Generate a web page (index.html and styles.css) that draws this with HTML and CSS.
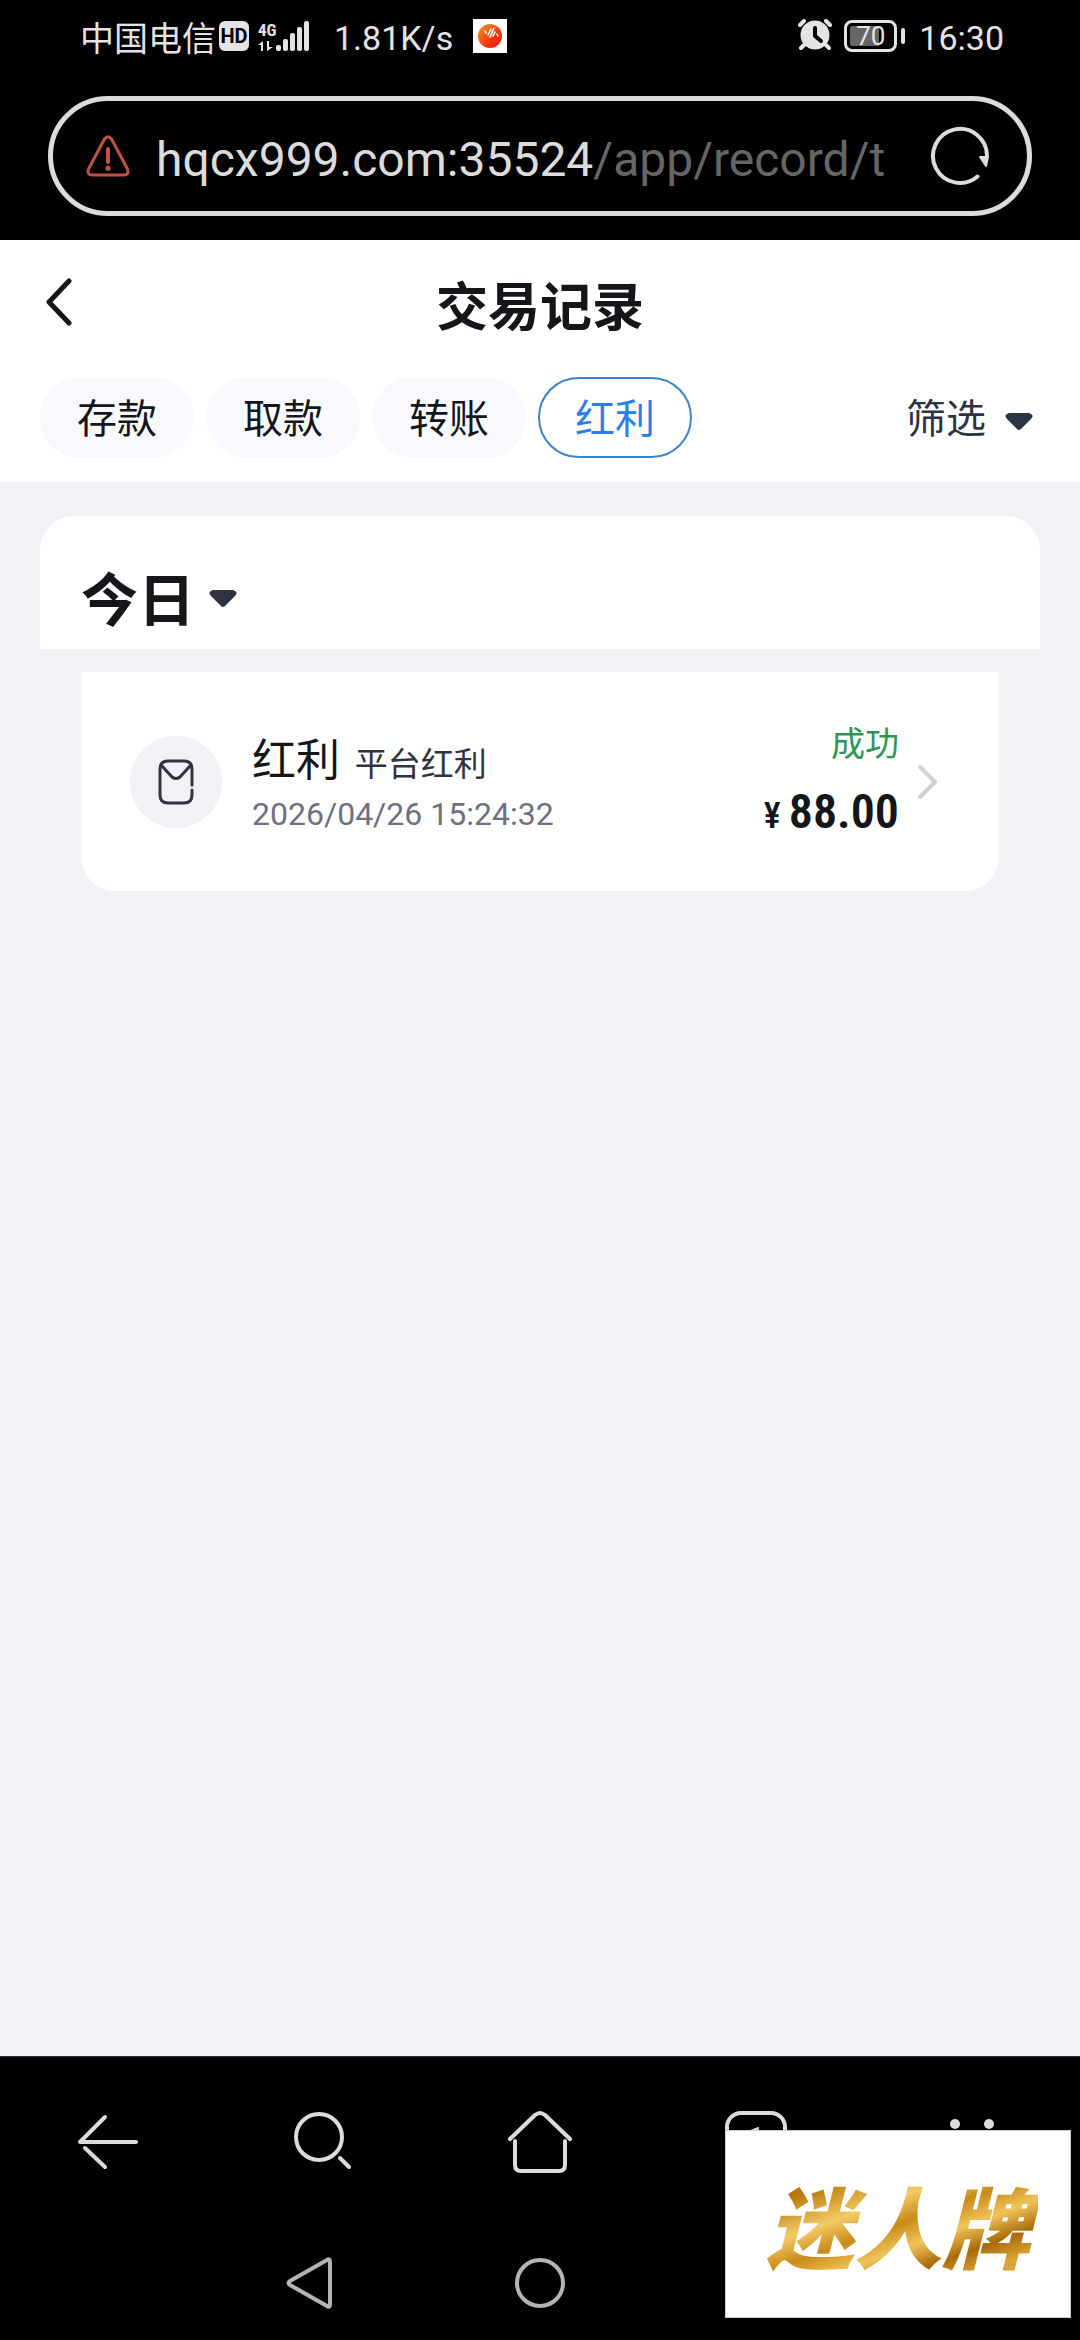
FILE: index.html
```html
<!DOCTYPE html>
<html lang="zh-CN">
<head>
    <meta charset="UTF-8">
    <meta name="viewport" content="width=device-width, initial-scale=1.0">
    <title>交易记录</title>
    <link rel="stylesheet" href="styles.css">
</head>
<body>

    <!-- Phone status bar -->
    <div class="status-bar">
        <div class="status-left">
            <span class="carrier">中国电信</span>
            <span class="hd">HD</span>
            <span class="network">
                <span class="network-type">4G</span>
                <svg width="16" height="12" viewBox="0 0 16 12" fill="#e4e4e4"><path d="M5 1v10H3V5H0zM9 1h2v6h4l-6 4z"/></svg>
            </span>
            <svg class="signal" width="34" height="32" viewBox="0 0 34 32" fill="#e4e4e4">
                <rect x="0" y="25" width="5" height="6" rx="2"/>
                <rect x="7" y="19" width="5" height="12" rx="2"/>
                <rect x="14" y="13" width="5" height="18" rx="2"/>
                <rect x="21" y="7" width="5" height="24" rx="2"/>
                <rect x="28" y="1" width="5" height="30" rx="2"/>
            </svg>
            <span class="speed">1.81K/s</span>
            <svg width="34" height="34" viewBox="0 0 34 34">
                <defs>
                    <linearGradient id="ball" x1="0" y1="0" x2="1" y2="1">
                        <stop offset="0" stop-color="#f59a2c"/>
                        <stop offset="0.6" stop-color="#f8350c"/>
                        <stop offset="1" stop-color="#e91408"/>
                    </linearGradient>
                </defs>
                <rect width="34" height="34" fill="#fff"/>
                <circle cx="17" cy="17" r="12" fill="url(#ball)"/>
                <path d="M12 12l1 2M18 10l-3 6M21 9l-4 9M22 13l-2 4M24 15l1 2" fill="none" stroke="#fff" stroke-width="1.6" stroke-linecap="round"/>
            </svg>
        </div>
        <div class="status-right">
            <svg width="34" height="32" viewBox="0 0 34 32">
                <circle cx="17" cy="16" r="14.5" fill="#e4e4e4"/>
                <path d="M2 6l4-4M32 6l-4-4M6 26l-3 3M28 26l3 3" stroke="#e4e4e4" stroke-width="4" stroke-linecap="round"/>
                <path d="M17 9v8l6 5" fill="none" stroke="#000" stroke-width="4" stroke-linecap="round" stroke-linejoin="round"/>
            </svg>
            <span class="battery">70</span>
            <span class="clock">16:30</span>
        </div>
    </div>

    <!-- Browser address bar -->
    <div class="browser-top">
        <div class="address-bar">
            <svg width="44" height="44" viewBox="0 0 44 44" fill="none" stroke="#c4513f" stroke-width="3" stroke-linecap="round" stroke-linejoin="round">
                <path d="M18.500 5q3.500-4.500 7 0l16 30q2 6-4 6h-31q-6 0-4-6z"/>
                <path d="M22 15v13" stroke-width="4"/>
                <path d="M22 34v0.500" stroke-width="5"/>
            </svg>
            <button class="url">hqcx999.com:35524<span>/app/record/t</span></button>
            <button class="icon-button" aria-label="刷新">
                <svg width="60" height="60" viewBox="0 0 60 60">
                    <path d="M47.500 50.500A27 27 0 1 1 57 30" fill="none" stroke="#dcdcdc" stroke-width="4" stroke-linecap="round"/>
                    <path d="M50 31h8l-2 9z" fill="#dcdcdc" stroke="#dcdcdc" stroke-width="2" stroke-linejoin="round"/>
                </svg>
            </button>
        </div>
    </div>

    <!-- Page header -->
    <header class="header">
        <div class="title-row">
            <button class="icon-button" aria-label="返回">
                <svg width="28" height="48" viewBox="0 0 28 48" fill="none" stroke="#15161a" stroke-width="5" stroke-linecap="round" stroke-linejoin="round"><path d="M24 3L4 24l20 21"/></svg>
            </button>
            <h1>交易记录</h1>
        </div>
        <div class="filter-row">
            <nav class="tabs">
                <button class="tab">存款</button>
                <button class="tab">取款</button>
                <button class="tab">转账</button>
                <button class="tab active">红利</button>
            </nav>
            <button class="filter">
                筛选
                <svg width="28" height="18" viewBox="0 0 28 18" fill="#2e3344"><path d="M4 0h20q6 2 2 6L16 16q-2 2-4 0L2 6Q-2 2 4 0z"/></svg>
            </button>
        </div>
    </header>

    <!-- Records -->
    <main class="content">
        <section class="day">
            <button class="day-button">
                今日
                <svg width="28" height="18" viewBox="0 0 28 18" fill="#2e3344"><path d="M4 0h20q6 2 2 6L16 16q-2 2-4 0L2 6Q-2 2 4 0z"/></svg>
            </button>
        </section>
        <a class="record" href="#">
            <span class="record-icon">
                <svg width="36" height="48" viewBox="0 0 36 48" fill="none" stroke="#30333f" stroke-width="3" stroke-linecap="round" stroke-linejoin="round">
                    <path d="M34 27V11q0-8-8-8H10q-8 0-8 8v26q0 8 8 8h16q8 0 8-8v-5"/>
                    <path d="M4 8l10 11q4 3 8 0L32 8"/>
                </svg>
            </span>
            <span class="record-info">
                <span class="record-title">红利 <small>平台红利</small></span>
                <span class="record-time">2026/04/26 15:24:32</span>
            </span>
            <span class="record-result">
                <span class="record-status">成功</span>
                <span class="record-amount"><small>¥</small>88.00</span>
            </span>
            <svg class="record-arrow" width="20" height="36" viewBox="0 0 20 36" fill="none" stroke="#d0d1d7" stroke-width="4" stroke-linecap="round" stroke-linejoin="round"><path d="M2 3l15 15L2 33"/></svg>
        </a>
    </main>

    <!-- Browser and system navigation -->
    <footer class="bottom">
        <nav class="browser-nav">
            <button aria-label="后退">
                <svg width="64" height="64" viewBox="0 0 64 64" fill="none" stroke="#dcdcdc" stroke-width="4" stroke-linecap="round" stroke-linejoin="round"><path d="M60 32H4L29 7"/><path d="M9 38l20 19"/></svg>
            </button>
            <button aria-label="搜索">
                <svg width="64" height="64" viewBox="0 0 64 64" fill="none" stroke="#dcdcdc" stroke-width="4" stroke-linecap="round"><circle cx="27" cy="27" r="23"/><path d="M48 48l9 9"/></svg>
            </button>
            <button aria-label="主页">
                <svg width="64" height="64" viewBox="0 0 64 64" fill="none" stroke="#dcdcdc" stroke-width="4" stroke-linecap="round" stroke-linejoin="round"><path d="M2 29L27 5q5-4 10 0l25 24"/><path d="M7 31v24q0 6 6 6h38q6 0 6-6V31"/></svg>
            </button>
            <button aria-label="标签页"><span class="tab-count">1</span></button>
            <button aria-label="菜单">
                <svg width="64" height="64" viewBox="0 0 64 64" fill="#dcdcdc"><circle cx="15" cy="14" r="5"/><circle cx="49" cy="14" r="5"/><circle cx="15" cy="48" r="5"/><circle cx="49" cy="48" r="5"/></svg>
            </button>
        </nav>
        <nav class="system-nav">
            <button aria-label="系统返回">
                <svg width="48" height="52" viewBox="0 0 48 52" fill="none" stroke="#b4b4b4" stroke-width="4" stroke-linejoin="round"><path d="M42 3Q45 1 45 5v42q0 4-3 2L5 28q-3-2 0-4z"/></svg>
            </button>
            <button aria-label="主屏幕">
                <svg width="52" height="52" viewBox="0 0 52 52" fill="none" stroke="#b4b4b4" stroke-width="4"><circle cx="26" cy="26" r="23"/></svg>
            </button>
            <button aria-label="最近任务">
                <svg width="48" height="52" viewBox="0 0 48 52" fill="none" stroke="#b4b4b4" stroke-width="4"><rect x="3" y="5" width="42" height="42" rx="4"/></svg>
            </button>
        </nav>
        <div class="brand"><span>迷人牌</span></div>
    </footer>

</body>
</html>
```
FILE: styles.css
```css
* {
    box-sizing: border-box;
}

body {
    margin: 0;
    min-height: 100vh;
    display: flex;
    flex-direction: column;
    font-family: "Noto Sans CJK SC", sans-serif;
    background-color: #f1f1f6;
    color: #15161a;
}

button {
    padding: 0;
    border: none;
    background: none;
    font: inherit;
    color: inherit;
    cursor: pointer;
}

svg {
    display: block;
    flex-shrink: 0;
}

/* Status bar */
.status-bar {
    display: flex;
    justify-content: space-between;
    height: 72px;
    padding: 0 76px 0 80px;
    background-color: #000;
    color: #e4e4e4;
    font-family: Roboto, "Noto Sans CJK SC", sans-serif;
}

.status-left,
.status-right {
    display: flex;
    align-items: center;
}

.carrier {
    font-family: "Noto Sans CJK SC", sans-serif;
    font-size: 34px;
}

.hd {
    width: 30px;
    margin: 0 9px 0 3px;
    border-radius: 6px;
    background-color: #e4e4e4;
    color: #000;
    font-size: 20px;
    font-weight: bold;
    line-height: 30px;
    text-align: center;
}

.network {
    display: flex;
    flex-direction: column;
    width: 18px;
    height: 32px;
}

.network-type {
    font-family: "Roboto Condensed", Roboto, sans-serif;
    font-size: 17px;
    font-weight: bold;
    line-height: 20px;
}

.speed {
    margin: 0 20px 0 24px;
    font-size: 34px;
}

.battery {
    position: relative;
    width: 53px;
    margin: 0 22px 0 12px;
    border: 3px solid #e4e4e4;
    border-radius: 8px;
    background: linear-gradient(to right, #666 70%, #000 70%) content-box;
    padding: 3px;
    font-size: 26px;
    line-height: 20px;
    text-align: center;
}

/* Battery terminal */
.battery::after {
    content: "";
    position: absolute;
    top: 5px;
    right: -11px;
    width: 4px;
    height: 16px;
    border-radius: 2px;
    background-color: #e4e4e4;
}

.status-right svg {
    margin-bottom: 2px;
}

.speed,
.clock {
    padding-top: 4px;
}

.clock {
    font-size: 34px;
}

/* Address bar */
.browser-top {
    padding: 24px 48px;
    background-color: #000;
}

.address-bar {
    display: flex;
    align-items: center;
    height: 120px;
    padding: 0 37px 0 33px;
    border: 5px solid #dcdcdc;
    border-radius: 60px;
}

.url {
    flex: 1;
    overflow: hidden;
    margin-left: 26px;
    padding-top: 6px;
    font-family: Roboto, sans-serif;
    font-size: 48px;
    text-align: left;
    white-space: nowrap;
    color: #dcdcdc;
}

.url span {
    color: #666;
}

/* Header */
.header {
    padding: 24px 40px;
    background-color: #fff;
}

.title-row {
    display: grid;
    grid-template-columns: 80px 1fr 80px;
    align-items: center;
    height: 80px;
    margin-bottom: 33px;
}

.title-row .icon-button {
    padding: 0 5px 4px;
    justify-self: start;
}

h1 {
    margin: 0;
    font-size: 52px;
    line-height: 80px;
    text-align: center;
}

.filter-row {
    display: flex;
    justify-content: space-between;
    align-items: center;
}

.tabs {
    display: flex;
    gap: 12px;
}

.tab {
    width: 154px;
    height: 81px;
    padding-bottom: 4px;
    border-radius: 41px;
    background-color: #f8f9ff;
    font-size: 40px;
}

.tab.active {
    border: 2px solid #3d82cc;
    background-color: #fff;
    color: #2b7de8;
}

.filter,
.day-button {
    display: flex;
    align-items: center;
    padding-bottom: 4px;
}

.filter {
    gap: 19px;
    margin-right: 7px;
    font-size: 40px;
    color: #2e3344;
}

.filter svg {
    margin-top: 12px;
}

/* Records */
.content {
    flex: 1;
    padding: 34px 40px;
}

.day {
    margin-bottom: 23px;
    padding: 42px 41px 11px;
    border-radius: 34px 34px 0 0;
    background-color: #fff;
}

.day-button {
    gap: 14px;
    height: 80px;
    font-size: 57px;
    font-weight: bold;
}

.day-button svg {
    margin-top: 6px;
}

.record {
    display: flex;
    align-items: center;
    height: 219px;
    margin: 0 41px;
    padding: 0 61px 0 49px;
    border-radius: 0 0 34px 34px;
    background-color: #fff;
    color: inherit;
    text-decoration: none;
}

.record-icon {
    display: flex;
    justify-content: center;
    align-items: center;
    width: 92px;
    height: 92px;
    margin-right: 30px;
    border-radius: 50%;
    background-color: #f1f1f6;
}

.record-info,
.record-result {
    display: flex;
    flex-direction: column;
}

.record-info {
    flex: 1;
}

.record-title {
    font-size: 44px;
    line-height: 60px;
}

.record-title small {
    margin-left: 5px;
    font-size: 33px;
    color: #30333f;
}

.record-time {
    font-family: Roboto, sans-serif;
    font-size: 32px;
    line-height: 44px;
    color: #6e7082;
}

.record-result {
    align-items: flex-end;
    gap: 16px;
}

.record-status {
    font-size: 34px;
    line-height: 48px;
    color: #2f9555;
}

.record-amount {
    font-family: "Roboto Condensed", "Liberation Sans Narrow", Roboto, sans-serif;
    font-size: 48px;
    font-weight: 600;
    line-height: 60px;
}

.record-amount small {
    margin-right: 8px;
    font-size: 36px;
    font-weight: 500;
}

.record-arrow {
    margin-left: 19px;
}

/* Bottom bars */
.bottom {
    position: relative;
    background-color: #000;
}

.browser-nav {
    display: grid;
    grid-template-columns: repeat(5, 1fr);
    height: 170px;
    border-top: 1px solid #333;
}

.system-nav {
    display: grid;
    grid-template-columns: repeat(3, 1fr);
    height: 114px;
    padding: 0 193px;
}

.browser-nav button,
.system-nav button {
    display: flex;
    justify-content: center;
    align-items: center;
}

.tab-count {
    width: 62px;
    height: 62px;
    border: 4px solid #dcdcdc;
    border-radius: 16px;
    font-family: Roboto, sans-serif;
    font-size: 38px;
    line-height: 54px;
    color: #dcdcdc;
}

/* Brand label over the bottom bars */
.brand {
    position: absolute;
    right: 9px;
    bottom: 22px;
    display: flex;
    justify-content: center;
    align-items: center;
    width: 346px;
    height: 188px;
    border: 1px solid #ccc;
    background-color: #fff;
}

.brand span {
    padding: 0 8px;
    background: linear-gradient(160deg, #b87708 20%, #f3cb67 38%, #c98a17 50%, #f0c45a 62%, #a86a08 74%, #dca53a 85%);
    -webkit-background-clip: text;
    background-clip: text;
    font-size: 88px;
    font-style: italic;
    font-weight: 900;
    line-height: 120px;
    color: transparent;
}
```
